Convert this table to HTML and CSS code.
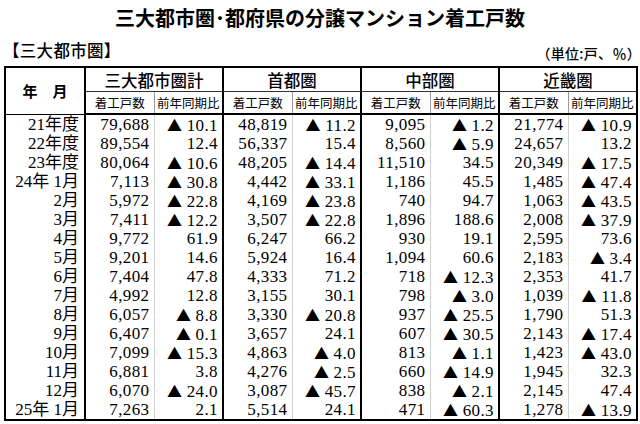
FILE: index.html
```html
<!DOCTYPE html>
<html lang="ja">
<head>
<meta charset="utf-8">
<title>三大都市圏・都府県の分譲マンション着工戸数</title>
<link rel="stylesheet" href="styles.css">
</head>
<body>
<div class="page">
  <h1 class="title">三大都市圏･都府県の分譲マンション着工戸数</h1>
  <div class="caption">
    <span class="section">【三大都市圏】</span>
    <span class="unit">（単位:戸、％）</span>
  </div>
  <table class="stats">
    <colgroup>
      <col class="c-label">
      <col class="c-sub"><col class="c-sub">
      <col class="c-sub"><col class="c-sub">
      <col class="c-sub"><col class="c-sub">
      <col class="c-sub"><col class="c-sub">
    </colgroup>
    <thead>
      <tr class="h1">
        <th rowspan="2" class="ym">年　月</th>
        <th colspan="2" class="grp">三大都市圏計</th>
        <th colspan="2" class="grp">首都圏</th>
        <th colspan="2" class="grp">中部圏</th>
        <th colspan="2" class="grp">近畿圏</th>
      </tr>
      <tr class="h2">
        <th class="a">着工戸数</th><th class="b">前年同期比</th>
        <th class="a">着工戸数</th><th class="b">前年同期比</th>
        <th class="a">着工戸数</th><th class="b">前年同期比</th>
        <th class="a">着工戸数</th><th class="b">前年同期比</th>
      </tr>
    </thead>
    <tbody>
      <tr><td class="lb">21年度</td><td class="a">79,688</td><td class="b"><span class="tri">▲</span> 10.1</td><td class="a">48,819</td><td class="b"><span class="tri">▲</span> 11.2</td><td class="a">9,095</td><td class="b"><span class="tri">▲</span> 1.2</td><td class="a">21,774</td><td class="b"><span class="tri">▲</span> 10.9</td></tr>
      <tr><td class="lb">22年度</td><td class="a">89,554</td><td class="b">12.4</td><td class="a">56,337</td><td class="b">15.4</td><td class="a">8,560</td><td class="b"><span class="tri">▲</span> 5.9</td><td class="a">24,657</td><td class="b">13.2</td></tr>
      <tr><td class="lb">23年度</td><td class="a">80,064</td><td class="b"><span class="tri">▲</span> 10.6</td><td class="a">48,205</td><td class="b"><span class="tri">▲</span> 14.4</td><td class="a">11,510</td><td class="b">34.5</td><td class="a">20,349</td><td class="b"><span class="tri">▲</span> 17.5</td></tr>
      <tr><td class="lb">24年 1月</td><td class="a">7,113</td><td class="b"><span class="tri">▲</span> 30.8</td><td class="a">4,442</td><td class="b"><span class="tri">▲</span> 33.1</td><td class="a">1,186</td><td class="b">45.5</td><td class="a">1,485</td><td class="b"><span class="tri">▲</span> 47.4</td></tr>
      <tr><td class="lb">2月</td><td class="a">5,972</td><td class="b"><span class="tri">▲</span> 22.8</td><td class="a">4,169</td><td class="b"><span class="tri">▲</span> 23.8</td><td class="a">740</td><td class="b">94.7</td><td class="a">1,063</td><td class="b"><span class="tri">▲</span> 43.5</td></tr>
      <tr><td class="lb">3月</td><td class="a">7,411</td><td class="b"><span class="tri">▲</span> 12.2</td><td class="a">3,507</td><td class="b"><span class="tri">▲</span> 22.8</td><td class="a">1,896</td><td class="b">188.6</td><td class="a">2,008</td><td class="b"><span class="tri">▲</span> 37.9</td></tr>
      <tr><td class="lb">4月</td><td class="a">9,772</td><td class="b">61.9</td><td class="a">6,247</td><td class="b">66.2</td><td class="a">930</td><td class="b">19.1</td><td class="a">2,595</td><td class="b">73.6</td></tr>
      <tr><td class="lb">5月</td><td class="a">9,201</td><td class="b">14.6</td><td class="a">5,924</td><td class="b">16.4</td><td class="a">1,094</td><td class="b">60.6</td><td class="a">2,183</td><td class="b"><span class="tri">▲</span> 3.4</td></tr>
      <tr><td class="lb">6月</td><td class="a">7,404</td><td class="b">47.8</td><td class="a">4,333</td><td class="b">71.2</td><td class="a">718</td><td class="b"><span class="tri">▲</span> 12.3</td><td class="a">2,353</td><td class="b">41.7</td></tr>
      <tr><td class="lb">7月</td><td class="a">4,992</td><td class="b">12.8</td><td class="a">3,155</td><td class="b">30.1</td><td class="a">798</td><td class="b"><span class="tri">▲</span> 3.0</td><td class="a">1,039</td><td class="b"><span class="tri">▲</span> 11.8</td></tr>
      <tr><td class="lb">8月</td><td class="a">6,057</td><td class="b"><span class="tri">▲</span> 8.8</td><td class="a">3,330</td><td class="b"><span class="tri">▲</span> 20.8</td><td class="a">937</td><td class="b"><span class="tri">▲</span> 25.5</td><td class="a">1,790</td><td class="b">51.3</td></tr>
      <tr><td class="lb">9月</td><td class="a">6,407</td><td class="b"><span class="tri">▲</span> 0.1</td><td class="a">3,657</td><td class="b">24.1</td><td class="a">607</td><td class="b"><span class="tri">▲</span> 30.5</td><td class="a">2,143</td><td class="b"><span class="tri">▲</span> 17.4</td></tr>
      <tr><td class="lb">10月</td><td class="a">7,099</td><td class="b"><span class="tri">▲</span> 15.3</td><td class="a">4,863</td><td class="b"><span class="tri">▲</span> 4.0</td><td class="a">813</td><td class="b"><span class="tri">▲</span> 1.1</td><td class="a">1,423</td><td class="b"><span class="tri">▲</span> 43.0</td></tr>
      <tr><td class="lb">11月</td><td class="a">6,881</td><td class="b">3.8</td><td class="a">4,276</td><td class="b"><span class="tri">▲</span> 2.5</td><td class="a">660</td><td class="b"><span class="tri">▲</span> 14.9</td><td class="a">1,945</td><td class="b">32.3</td></tr>
      <tr><td class="lb">12月</td><td class="a">6,070</td><td class="b"><span class="tri">▲</span> 24.0</td><td class="a">3,087</td><td class="b"><span class="tri">▲</span> 45.7</td><td class="a">838</td><td class="b"><span class="tri">▲</span> 2.1</td><td class="a">2,145</td><td class="b">47.4</td></tr>
      <tr><td class="lb">25年 1月</td><td class="a">7,263</td><td class="b">2.1</td><td class="a">5,514</td><td class="b">24.1</td><td class="a">471</td><td class="b"><span class="tri">▲</span> 60.3</td><td class="a">1,278</td><td class="b"><span class="tri">▲</span> 13.9</td></tr>
    </tbody>
  </table>
</div>
</body>
</html>
```

FILE: styles.css
```css
html, body {
  margin: 0;
  padding: 0;
  background: #ffffff;
  color: #000000;
}

.page {
  width: 640px;
  padding: 0 4px;
  box-sizing: border-box;
  font-family: "Noto Sans CJK JP", "Noto Sans", sans-serif;
}

.title {
  margin: 0;
  padding-top: 5px;
  height: 29px;
  font-size: 20px;
  line-height: 25px;
  font-weight: 700;
  text-align: center;
}

.caption {
  display: flex;
  justify-content: space-between;
  align-items: flex-end;
  height: 32px;
}

.section {
  font-size: 16.5px;
  font-weight: 500;
  line-height: 22px;
  letter-spacing: 0.3px;
  margin-left: -1px;
  padding-bottom: 5px;
}

.unit {
  font-size: 14px;
  font-weight: 500;
  line-height: 18px;
  letter-spacing: 0.3px;
  padding-bottom: 4px;
  margin-right: -5px;
}

.stats {
  border-collapse: collapse;
  table-layout: fixed;
  width: 632px;
  border: 2px solid #000;
}

.c-label { width: 80px; }
.c-sub { width: 69px; }

.stats th {
  font-weight: 500;
  padding: 0;
  text-align: center;
  border: 1px solid #000;
}

.stats .h1 th {
  height: 23px;
  font-size: 16.5px;
  line-height: 20px;
}

.stats .h1 th.ym {
  font-size: 15px;
  font-weight: 700;
  border-right: 2px solid #000;
}

.stats .h1 th.grp {
  border-left: 2px solid #000;
  border-right: 2px solid #000;
  border-bottom: 1px solid #333;
}

.stats .h2 th {
  height: 21px;
  font-size: 12.5px;
  font-weight: 400;
  line-height: 16px;
  border-bottom: 2px solid #000;
}

.stats .h2 th.a {
  border-left: 2px solid #000;
  border-right: 1px solid #999;
}

.stats .h2 th.b {
  border-right: 2px solid #000;
}

.stats tbody tr {
  height: 19px;
}

.stats td {
  height: 19px;
  padding: 0 4px 0 0;
  font-family: "Liberation Serif", "Noto Sans CJK JP", serif;
  font-size: 17px;
  line-height: 13px;
  text-align: right;
  white-space: nowrap;
  letter-spacing: 0.4px;
  vertical-align: middle;
  border: 0;
}

.stats td.lb {
  border-right: 2px solid #000;
  padding-right: 5px;
  letter-spacing: 0;
}

.stats td.a {
  border-right: 1px solid #d0d0d0;
}

.stats td.b {
  border-right: 2px solid #000;
}

.tri {
  font-family: "Noto Sans CJK JP", sans-serif;
  font-size: 15px;
  letter-spacing: 0;
}
```
